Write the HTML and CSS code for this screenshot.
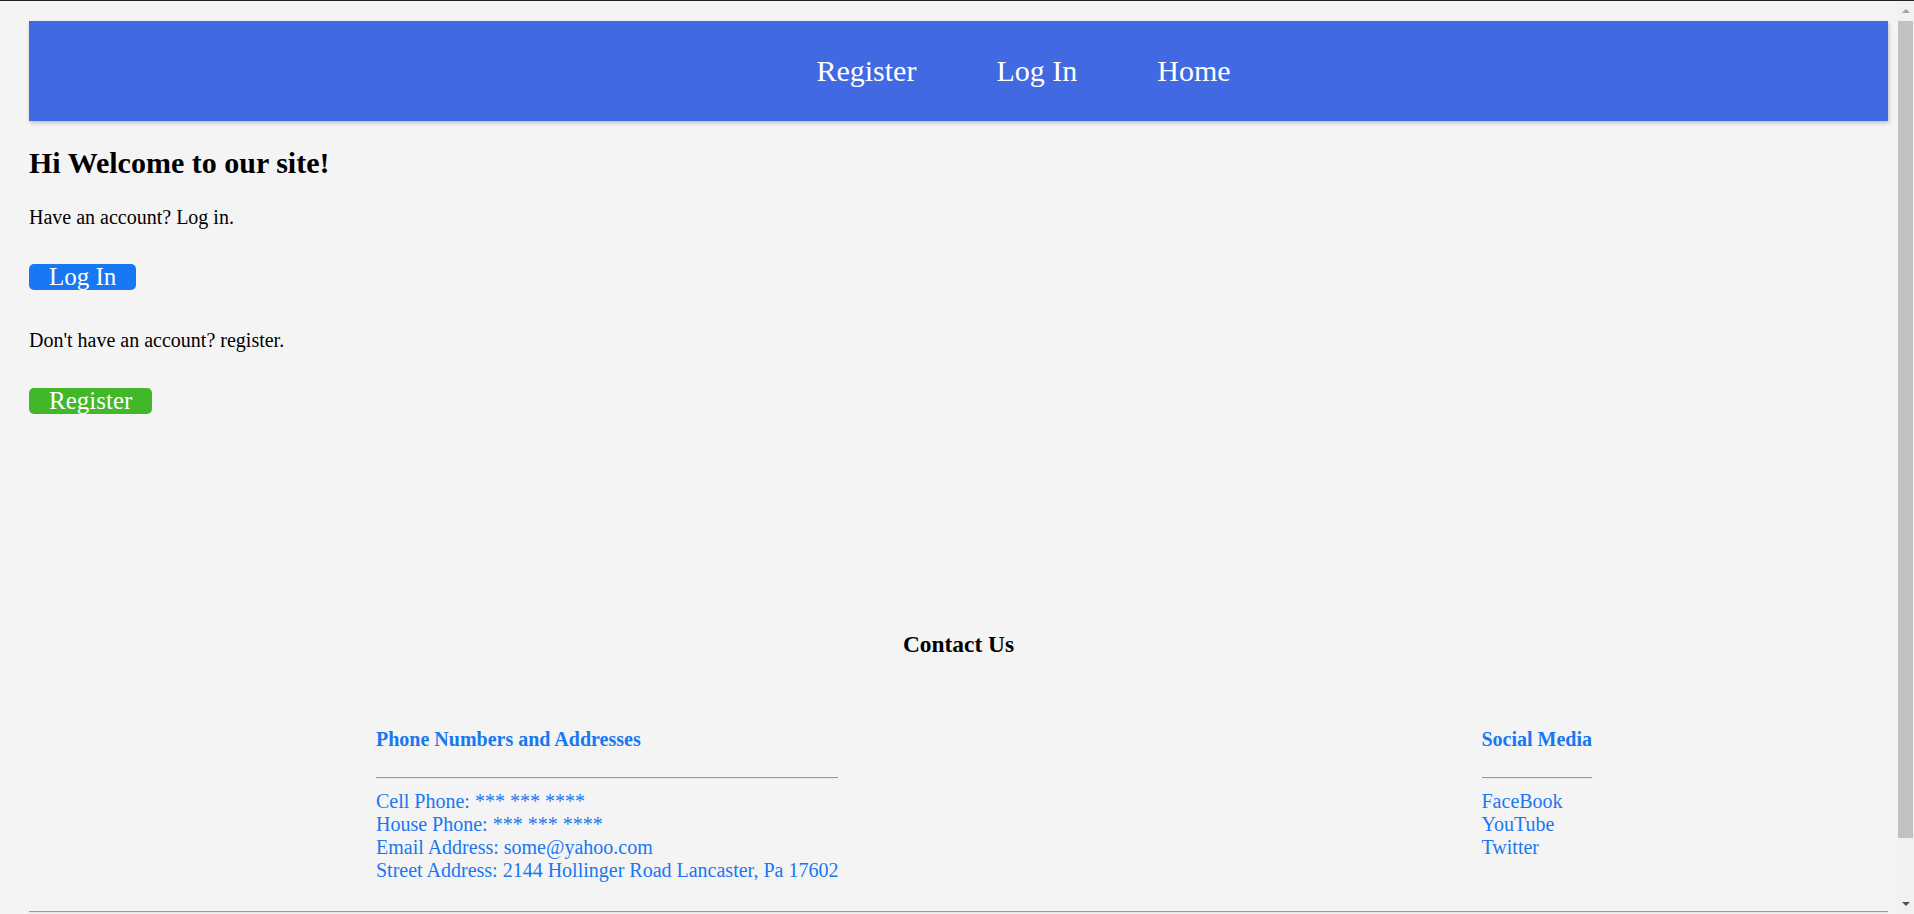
FILE: index.html
```html
<!DOCTYPE html>
<html lang="en">
<head>
<meta charset="utf-8">
<title>Welcome</title>
<link rel="stylesheet" href="styles.css">
</head>
<body>
<header class="topbar">
  <nav class="nav">
    <a class="nav-link" href="#">Register</a>
    <a class="nav-link" href="#">Log In</a>
    <a class="nav-link" href="#">Home</a>
  </nav>
</header>
<main class="main">
  <h2 class="welcome">Hi Welcome to our site!</h2>
  <p class="prompt prompt-first">Have an account? Log in.</p>
  <a class="btn btn-blue" href="#">Log In</a>
  <p class="prompt prompt-second">Don't have an account? register.</p>
  <a class="btn btn-green" href="#">Register</a>
</main>
<footer class="footer">
  <h3 class="contact-title">Contact Us</h3>
  <div class="cols">
    <div class="col">
      <h4 class="col-title">Phone Numbers and Addresses</h4>
      <hr class="col-rule">
      <p class="col-text">Cell Phone: *** *** ****<br>House Phone: *** *** ****<br>Email Address: some@yahoo.com<br>Street Address: 2144 Hollinger Road Lancaster, Pa 17602</p>
    </div>
    <div class="col">
      <h4 class="col-title">Social Media</h4>
      <hr class="col-rule">
      <p class="col-text"><a class="social-link" href="#">FaceBook</a><br><a class="social-link" href="#">YouTube</a><br><a class="social-link" href="#">Twitter</a></p>
    </div>
  </div>
  <hr class="bottom-rule">
</footer>
<div class="scrollbar" aria-hidden="true">
  <span class="sb-arrow sb-up"></span>
  <span class="sb-thumb"></span>
  <span class="sb-arrow sb-down"></span>
</div>
</body>
</html>
```
FILE: styles.css
```css
html {
  background: #f4f4f4;
}
body {
  margin: 0;
  padding: 0 26px 60px 29px;
  border-top: 1px solid #222;
  font-family: "Liberation Serif", "Times New Roman", serif;
  color: #000;
  background: #f4f4f4;
}
.topbar {
  margin-top: 20px;
  height: 100px;
  background: #4169e1;
  box-shadow: 1px 2px 4px rgba(0, 0, 0, 0.22);
}
.nav {
  height: 100%;
  display: flex;
  align-items: center;
  justify-content: center;
  padding-left: 130px;
  gap: 80px;
}
.nav-link {
  color: #fff;
  text-decoration: none;
  font-size: 30px;
}
.main {
  display: flex;
  flex-direction: column;
  align-items: flex-start;
}
.welcome {
  margin: 24px 0 0;
  font-size: 30px;
  line-height: 35px;
  font-weight: bold;
}
.prompt {
  margin: 0;
  font-size: 20px;
  line-height: 23px;
}
.prompt-first {
  margin-top: 26px;
}
.prompt-second {
  margin-top: 39px;
}
.btn {
  display: block;
  height: 26px;
  padding: 0 20px;
  line-height: 25px;
  font-size: 25px;
  color: #fff;
  text-decoration: none;
  border-radius: 5px;
}
.btn-blue {
  margin-top: 35px;
  background: #1877f2;
}
.btn-green {
  margin-top: 36px;
  background: #42b72a;
}
.footer {
  margin-top: 217px;
}
.contact-title {
  margin: 0;
  text-align: center;
  font-size: 23.4px;
  line-height: 27px;
  font-weight: bold;
}
.cols {
  display: grid;
  grid-template-columns: 1105.5px max-content;
  padding-left: 347px;
  margin-top: 70px;
}
.col {
  justify-self: start;
  color: #1877f2;
}
.col-title {
  margin: 0;
  font-size: 20px;
  line-height: 23px;
  font-weight: bold;
}
.col-rule {
  margin: 26px 0 0;
  border: 0;
  border-top: 1px solid #9a9a9a;
  border-bottom: 1px solid #e6e6e6;
}
.col-text {
  margin: 11px 0 0;
  font-size: 20px;
  line-height: 23px;
  white-space: nowrap;
}
.social-link {
  color: #1877f2;
  text-decoration: none;
}
.bottom-rule {
  margin: 29px 0 0;
  border: 0;
  border-top: 1px solid #9a9a9a;
  border-bottom: 1px solid #e6e6e6;
}
.scrollbar {
  position: fixed;
  top: 1px;
  right: 0;
  bottom: 0;
  width: 17px;
  background: #f1f1f1;
  display: flex;
  flex-direction: column;
  align-items: center;
}
.sb-arrow {
  width: 0;
  height: 0;
  border-left: 4px solid transparent;
  border-right: 4px solid transparent;
}
.sb-up {
  margin-top: 8px;
  border-bottom: 4px solid #a3a3a3;
}
.sb-thumb {
  margin-top: 8px;
  width: 15px;
  height: 817px;
  background: #c1c1c1;
}
.sb-down {
  margin-top: auto;
  margin-bottom: 8px;
  border-top: 4px solid #505050;
}
```
